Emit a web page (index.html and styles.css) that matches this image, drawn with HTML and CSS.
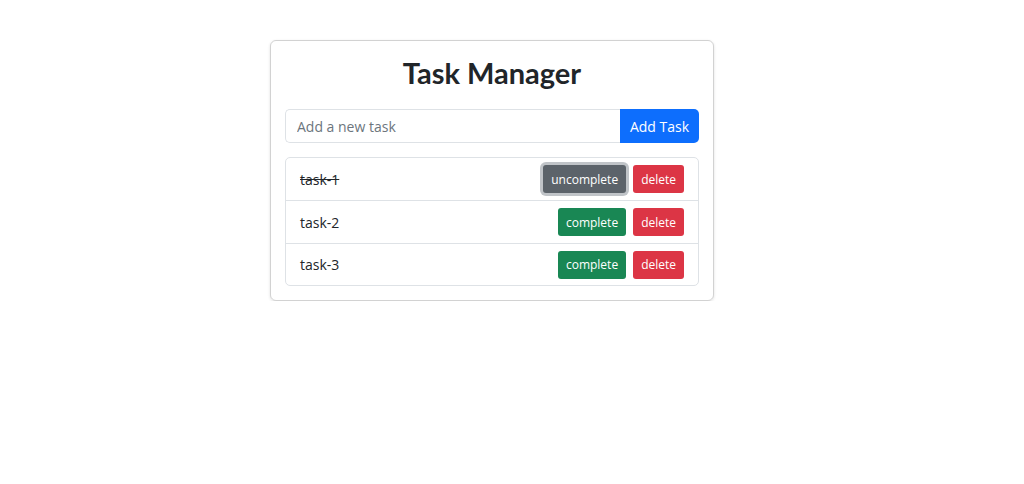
FILE: index.html
```html
<!DOCTYPE html>
<html lang="en">
<head>
    <meta charset="UTF-8">
    <meta name="viewport" content="width=device-width, initial-scale=1.0">
    <title>Task Manager</title>
    <link rel="stylesheet" href="styles.css">
</head>
<body>

    <div class="card">
        <h1 class="title">Task Manager</h1>

        <form class="input-group" onsubmit="return false">
            <input class="task-input" type="text" placeholder="Add a new task">
            <button class="btn btn-primary add-btn">Add Task</button>
        </form>

        <ul class="task-list">
            <li class="task-item">
                <span class="task-name done">task-1</span>
                <div class="actions">
                    <button class="btn btn-sm btn-secondary focused">uncomplete</button>
                    <button class="btn btn-sm btn-danger">delete</button>
                </div>
            </li>
            <li class="task-item">
                <span class="task-name">task-2</span>
                <div class="actions">
                    <button class="btn btn-sm btn-success">complete</button>
                    <button class="btn btn-sm btn-danger">delete</button>
                </div>
            </li>
            <li class="task-item">
                <span class="task-name">task-3</span>
                <div class="actions">
                    <button class="btn btn-sm btn-success">complete</button>
                    <button class="btn btn-sm btn-danger">delete</button>
                </div>
            </li>
        </ul>
    </div>

</body>
</html>
```

FILE: styles.css
```css
* { box-sizing: border-box; }
body { margin: 0; font-family: "Open Sans", sans-serif; color: #212529; background: #fff; padding: 40px 0 0 270px; }
.card { width: 444px; border: 1px solid rgba(0, 0, 0, 0.175); border-radius: 6px; padding: 14px; box-shadow: 0 1px 3px rgba(0, 0, 0, 0.12); }
.title { margin: 0 0 19px; text-align: center; font-family: Lato, sans-serif; font-size: 29px; font-weight: 700; line-height: 35px; }
.input-group { display: flex; margin: 0 0 14px; }
.task-input { flex: 1; height: 34px; padding: 0 11px; border: 1px solid #dee2e6; border-right: none; border-radius: 5px 0 0 5px; font: inherit; font-size: 14px; color: #212529; outline: none; }
.task-input::placeholder { color: #6c757d; }
.btn { border: 1px solid transparent; color: #fff; font-family: inherit; cursor: pointer; }
.add-btn { height: 34px; width: 79px; padding: 0; font-size: 14px; border-radius: 0 5px 5px 0; }
.btn-primary { background: #0d6efd; }
.btn-sm { height: 28px; padding: 0 7px; font-size: 12px; border-radius: 3px; }
.btn-secondary { background: #5c636a; }
.btn-success { background: #198754; }
.btn-danger { background: #dc3545; }
.focused { box-shadow: 0 0 0 3px rgba(130, 138, 145, 0.5); }
.task-list { list-style: none; margin: 0; padding: 0; border: 1px solid #dee2e6; border-radius: 5px; }
.task-item { display: flex; align-items: center; justify-content: space-between; height: 42px; padding: 0 14px; border-top: 1px solid #dee2e6; }
.task-item:first-child { border-top: none; }
.task-item:nth-child(2) { height: 43px; }
.task-name { font-size: 14px; }
.done { text-decoration: line-through; }
.actions { display: flex; gap: 7px; }
```
